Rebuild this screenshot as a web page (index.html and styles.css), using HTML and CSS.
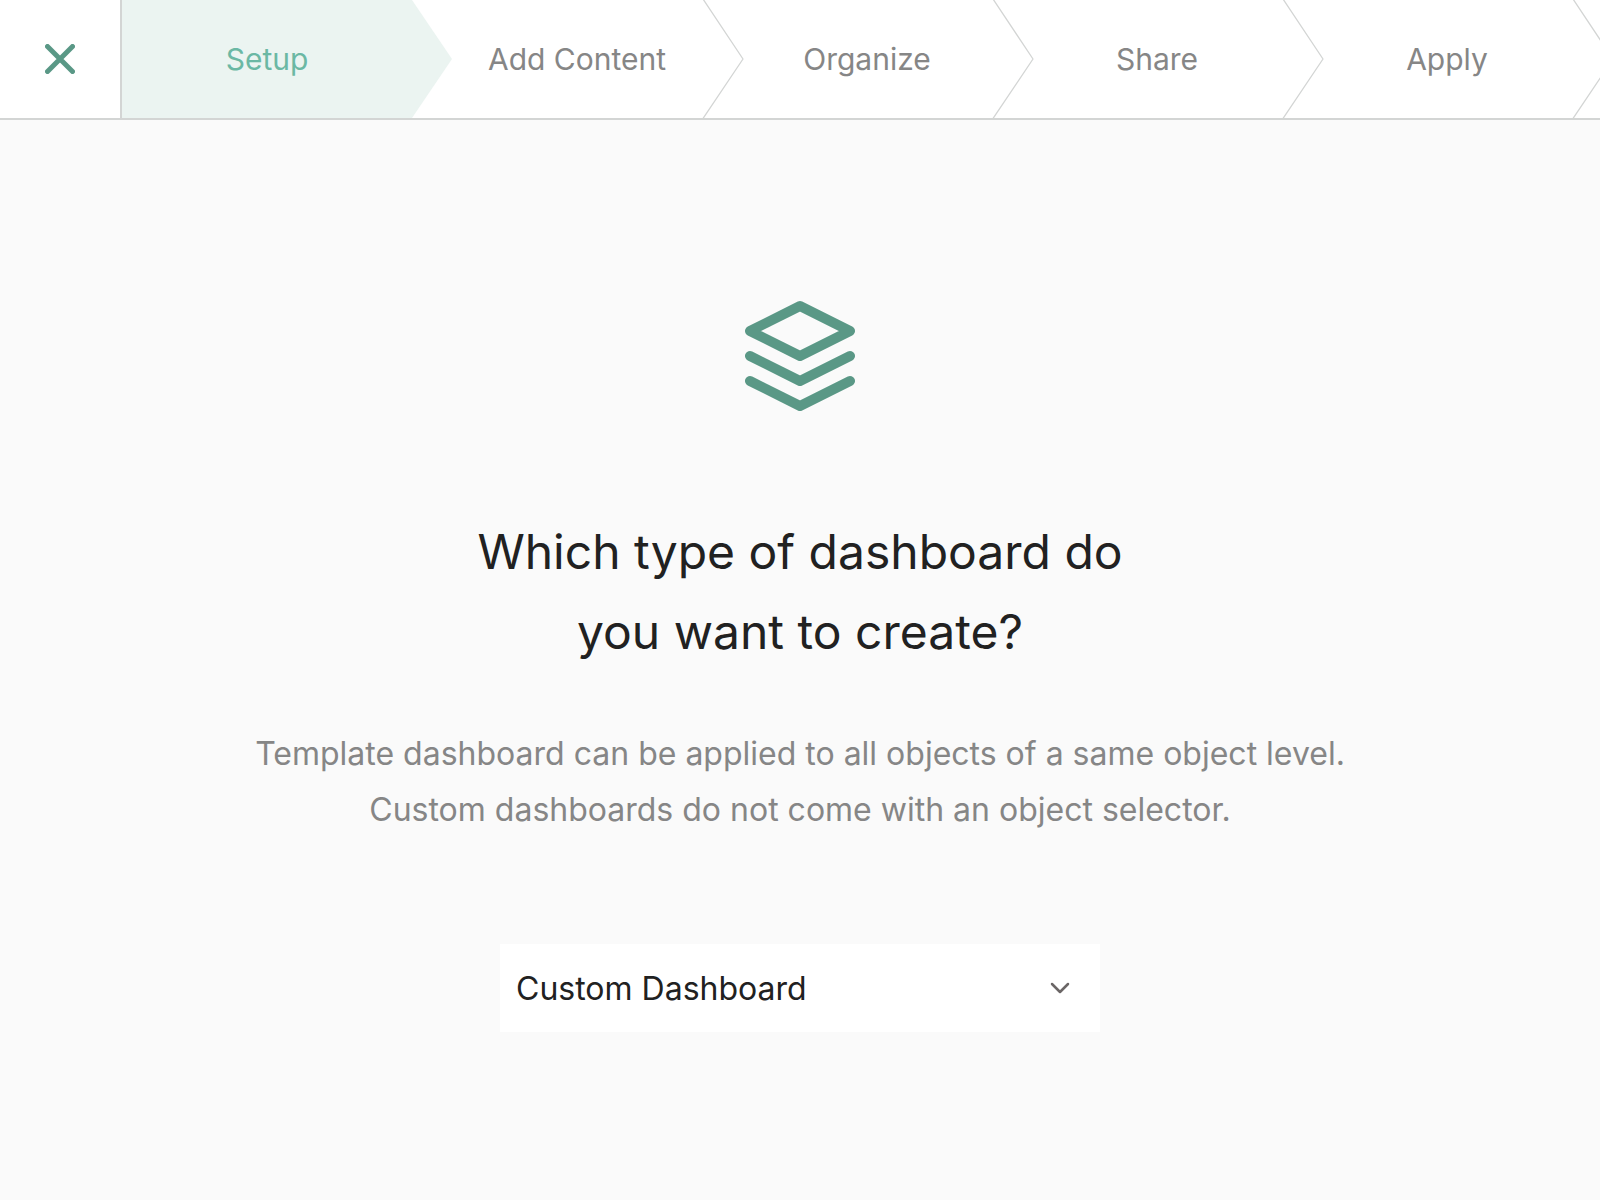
FILE: index.html
```html
<!DOCTYPE html>
<html lang="en">
<head>
<meta charset="utf-8">
<meta name="viewport" content="width=device-width, initial-scale=1">
<title>Create dashboard</title>
<link rel="stylesheet" href="styles.css">
</head>
<body>
<header class="topbar">
  <button class="close" type="button" aria-label="Close">
    <svg class="close-icon" viewBox="0 0 30 30" aria-hidden="true"><path d="M2.5 2.5 27.500 27.500M27.500 2.500 2.500 27.500"/></svg>
  </button>
  <nav class="steps" aria-label="Progress">
    <button class="step step-active" type="button" aria-current="step">Setup
      <svg class="arrow" viewBox="0 0 42 120" aria-hidden="true"><path d="M0 0 40 59 0 118z"/></svg>
    </button>
    <button class="step" type="button">Add Content
      <svg class="arrow" viewBox="0 0 42 120" aria-hidden="true"><path d="M1 -1 41 59 0 120"/></svg>
    </button>
    <button class="step" type="button">Organize
      <svg class="arrow" viewBox="0 0 42 120" aria-hidden="true"><path d="M1 -1 41 59 0 120"/></svg>
    </button>
    <button class="step" type="button">Share
      <svg class="arrow" viewBox="0 0 42 120" aria-hidden="true"><path d="M1 -1 41 59 0 120"/></svg>
    </button>
    <button class="step" type="button">Apply
      <svg class="arrow" viewBox="0 0 42 120" aria-hidden="true"><path d="M1 -1 41 59 0 120"/></svg>
    </button>
  </nav>
</header>
<main class="content">
  <svg class="layers" viewBox="0 0 24 24" aria-hidden="true"><path d="M12 2 2 7l10 5 10-5zM2 12l10 5 10-5M2 17l10 5 10-5"/></svg>
  <h1 class="title"><label for="type">Which type of dashboard do<br>you want to create?</label></h1>
  <p class="description">Template dashboard can be applied to all objects of a same object level.<br>Custom dashboards do not come with an object selector.</p>
  <div class="picker">
    <select class="select" id="type">
      <option>Custom Dashboard</option>
      <option>Template Dashboard</option>
    </select>
    <svg class="chevron" viewBox="0 0 20 12" aria-hidden="true"><path d="M2 2 10 10 18 2"/></svg>
  </div>
</main>
</body>
</html>
```
FILE: styles.css
```css
* {
  box-sizing: border-box;
}

body {
  margin: 0;
  min-height: 100vh;
  background: #fafafa;
  color: #212121;
  font-family: Inter, "Liberation Sans", sans-serif;
  font-weight: 400;
}

button,
select {
  font: inherit;
  border: 0;
  border-radius: 0;
  margin: 0;
}

svg {
  fill: none;
  stroke-linecap: round;
  stroke-linejoin: round;
}

.topbar {
  display: flex;
  height: 120px;
  background: #fff;
  border-bottom: 2px solid #d3d5d4;
  overflow: hidden;
}

.close {
  flex: none;
  display: flex;
  align-items: center;
  justify-content: center;
  width: 122px;
  padding: 0;
  background: #fff;
  border-right: 2px solid #d3d5d4;
}

.close-icon {
  width: 30px;
  height: 30px;
  stroke: #5a9886;
  stroke-width: 5;
}

.steps {
  display: flex;
  flex: 1;
}

.step {
  position: relative;
  flex: 0 0 290px;
  padding: 0 0 0 40px;
  background: none;
  color: #868686;
  font-size: 30px;
  text-align: center;
}

.step-active {
  padding: 0;
  background: #ebf4f1;
  color: #6bb8a4;
}

.arrow {
  position: absolute;
  top: 0;
  left: 100%;
  width: 42px;
  height: 120px;
  stroke: #d3d5d4;
  stroke-width: 1.3;
}

.step-active .arrow {
  fill: #ebf4f1;
  stroke: none;
}

.content {
  display: flex;
  flex-direction: column;
  align-items: center;
  padding: 176px 32px 96px;
  text-align: center;
}

.layers {
  width: 120px;
  height: 120px;
  stroke: #5a9886;
  stroke-width: 2;
}

.title {
  margin: 96px 0 0;
  font-size: 48px;
  font-weight: 400;
  line-height: 80px;
}

.description {
  margin: 54px 0 0;
  color: #868686;
  font-size: 32px;
  line-height: 56px;
}

.picker {
  position: relative;
  width: 100%;
  max-width: 600px;
  margin-top: 106px;
}

.select {
  appearance: none;
  display: block;
  width: 100%;
  height: 88px;
  padding: 0 64px 0 16px;
  background: #fff;
  color: #212121;
  font-size: 32px;
}

.chevron {
  position: absolute;
  top: 38px;
  right: 30px;
  width: 20px;
  height: 12px;
  stroke: #6b6666;
  stroke-width: 2.5;
  pointer-events: none;
}
```
